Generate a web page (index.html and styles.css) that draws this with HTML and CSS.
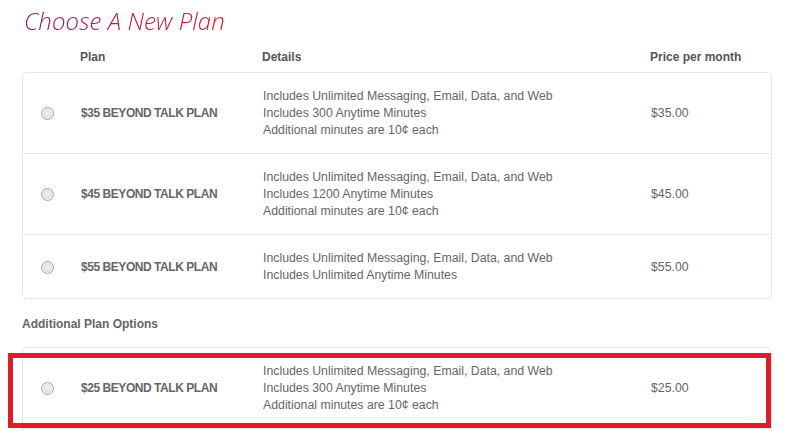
FILE: index.html
```html
<!DOCTYPE html>
<html>
<head>
    <title>Choose A New Plan</title>
    <meta name="viewport" content="width=device-width, initial-scale=1.0">
    <link rel="stylesheet" href="styles.css">
</head>
<body>
    <div class="container">
        <h1 class="title">Choose A New Plan</h1>

        <div class="plan-head">
            <span></span>
            <span>Plan</span>
            <span>Details</span>
            <span>Price per month</span>
        </div>

        <div class="plan-card">
            <label class="plan-row">
                <span class="radio-cell"><input type="radio" name="plan" class="radio"></span>
                <span class="plan-name">$35 BEYOND TALK PLAN</span>
                <span class="plan-details">
                    Includes Unlimited Messaging, Email, Data, and Web<br>
                    Includes 300 Anytime Minutes<br>
                    Additional minutes are 10¢ each
                </span>
                <span class="plan-price">$35.00</span>
            </label>
            <label class="plan-row">
                <span class="radio-cell"><input type="radio" name="plan" class="radio"></span>
                <span class="plan-name">$45 BEYOND TALK PLAN</span>
                <span class="plan-details">
                    Includes Unlimited Messaging, Email, Data, and Web<br>
                    Includes 1200 Anytime Minutes<br>
                    Additional minutes are 10¢ each
                </span>
                <span class="plan-price">$45.00</span>
            </label>
            <label class="plan-row">
                <span class="radio-cell"><input type="radio" name="plan" class="radio"></span>
                <span class="plan-name">$55 BEYOND TALK PLAN</span>
                <span class="plan-details">
                    Includes Unlimited Messaging, Email, Data, and Web<br>
                    Includes Unlimited Anytime Minutes
                </span>
                <span class="plan-price">$55.00</span>
            </label>
        </div>

        <h3 class="section-label">Additional Plan Options</h3>

        <div class="plan-card">
            <label class="plan-row highlighted">
                <span class="radio-cell"><input type="radio" name="plan" class="radio"></span>
                <span class="plan-name">$25 BEYOND TALK PLAN</span>
                <span class="plan-details">
                    Includes Unlimited Messaging, Email, Data, and Web<br>
                    Includes 300 Anytime Minutes<br>
                    Additional minutes are 10¢ each
                </span>
                <span class="plan-price">$25.00</span>
            </label>
            <div class="plan-row"></div>
        </div>
    </div>
</body>
</html>
```

FILE: styles.css
```css
body {
    margin: 0;
    background: #fff;
    font-family: "Liberation Sans", Arial, sans-serif;
    font-size: 12px;
    color: #666;
}
.container {
    padding: 0 18px 0 22px;
}
.title {
    margin: 0;
    padding: 5px 0 0 2px;
    height: 37px;
    font-family: "Open Sans", sans-serif;
    font-style: italic;
    font-weight: 300;
    font-size: 24px;
    line-height: 32px;
    letter-spacing: 0.1px;
    background: linear-gradient(90deg, #7d1f6e 0%, #b81645 45%, #d8172e 100%);
    -webkit-background-clip: text;
    background-clip: text;
    color: transparent;
    width: max-content;
}
.plan-head,
.plan-row {
    display: grid;
    grid-template-columns: 58px 182px 388px 1fr;
    align-items: center;
}
.plan-head {
    height: 30px;
    font-weight: bold;
    color: #555;
}
.plan-card {
    border: 1px solid #e6e6e6;
    border-radius: 5px;
}
.plan-row {
    position: relative;
    padding: 15px 0 14px;
    line-height: 17px;
    cursor: pointer;
}
.plan-row + .plan-row {
    border-top: 1px solid #e6e6e6;
}
.plan-details {
    font-size: 12.3px;
}
.plan-price {
    font-size: 12.3px;
}
.radio-cell {
    display: flex;
    padding-left: 18px;
}
.radio {
    appearance: none;
    -webkit-appearance: none;
    width: 13px;
    height: 13px;
    margin: 0;
    border-radius: 50%;
    border: 1px solid #a5a5a5;
    background: radial-gradient(circle at 50% 45%, #f4f4f4 0%, #e2e2e2 45%, #c9c9c9 100%);
    box-shadow: inset 0 0 0 1px #f7f7f7;
}
.plan-name {
    font-weight: bold;
    letter-spacing: -0.45px;
}
.section-label {
    margin: 0;
    padding: 19px 0 16px;
    font-size: 12px;
    line-height: 13px;
    font-weight: bold;
    color: #666;
}
/* red highlight drawn round the chosen option */
.highlighted::after {
    content: "";
    position: absolute;
    top: 5px;
    bottom: 0;
    left: -15px;
    right: 0;
    border: 5px solid #e31b25;
    pointer-events: none;
}
```
